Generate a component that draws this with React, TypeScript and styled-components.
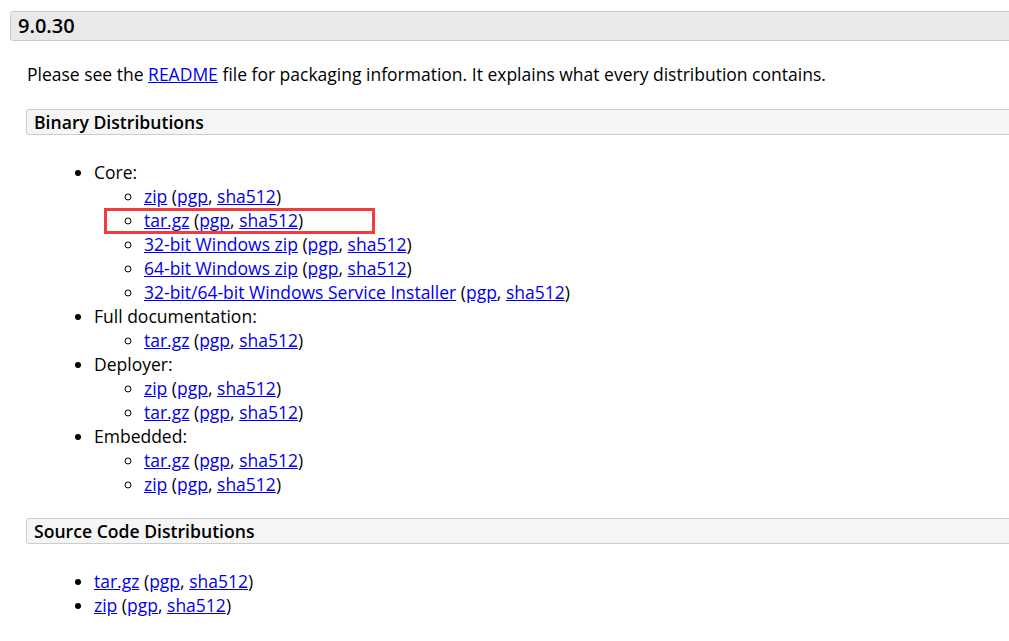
import React from 'react';
import styled, { createGlobalStyle } from 'styled-components';

const GlobalStyle = createGlobalStyle`
	html, body {
		margin: 0;
		padding: 0;
		background: #fff;
		overflow: hidden;
	}
	body {
		font-family: 'Open Sans', 'Liberation Sans', sans-serif;
		font-size: 17.5px;
		color: #000;
	}
`;

type Link = { label: string; highlight?: boolean };

const binary: { title: string; items: Link[] }[] = [
	{
		title: 'Core:',
		items: [
			{ label: 'zip' },
			{ label: 'tar.gz', highlight: true },
			{ label: '32-bit Windows zip' },
			{ label: '64-bit Windows zip' },
			{ label: '32-bit/64-bit Windows Service Installer' },
		],
	},
	{ title: 'Full documentation:', items: [{ label: 'tar.gz' }] },
	{ title: 'Deployer:', items: [{ label: 'zip' }, { label: 'tar.gz' }] },
	{ title: 'Embedded:', items: [{ label: 'tar.gz' }, { label: 'zip' }] },
];

const source: Link[] = [{ label: 'tar.gz' }, { label: 'zip' }];

const Download = ({ label }: { label: string }) => (
	<>
		<A href="#">{label}</A> (<A href="#">pgp</A>, <A href="#">sha512</A>)
	</>
);

export default function App() {
	return (
		<React.Fragment>
			<GlobalStyle />
			<Page>
				<VersionHeader>9.0.30</VersionHeader>
				<Section>
					<Intro>
						Please see the <A href="#">README</A> file for packaging information. It explains what every
						distribution contains.
					</Intro>
					<SubHeader>Binary Distributions</SubHeader>
					<List>
						{binary.map((group) => (
							<li key={group.title}>
								{group.title}
								<SubList>
									{group.items.map((item, i) => (
										<Item key={i}>
											{item.highlight && <Highlight />}
											<Download label={item.label} />
										</Item>
									))}
								</SubList>
							</li>
						))}
					</List>
					<SubHeader>Source Code Distributions</SubHeader>
					<List>
						{source.map((item, i) => (
							<li key={i}>
								<Download label={item.label} />
							</li>
						))}
					</List>
				</Section>
			</Page>
		</React.Fragment>
	);
}

const Page = styled.div`
	padding: 11px 0 0 10px;
`;

const VersionHeader = styled.h2`
	margin: 0 -20px 0 0;
	height: 30px;
	box-sizing: border-box;
	padding: 0 0 0 7px;
	line-height: 28px;
	font-size: 20px;
	font-weight: 600;
	background: #e9e9e9;
	border: 1px solid #ccc;
	border-radius: 3px;
`;

const Section = styled.div`
	padding-left: 16px;
`;

const Intro = styled.p`
	margin: 21px 0 23px 1px;
	line-height: 24px;
`;

const SubHeader = styled.h3`
	margin: 0 -20px 0 0;
	height: 26px;
	box-sizing: border-box;
	padding: 0 0 0 7px;
	line-height: 24px;
	font-size: 17.6px;
	font-weight: 600;
	background: #f5f5f5;
	border: 1px solid #ccc;
	border-radius: 3px;
`;

const List = styled.ul`
	margin: 25px 0 22px;
	padding-left: 68px;
	line-height: 24px;
	list-style: disc;
`;

const SubList = styled.ul`
	margin: 0;
	padding-left: 50px;
	list-style: circle;
`;

const Item = styled.li`
	position: relative;
`;

const Highlight = styled.span`
	position: absolute;
	left: -40px;
	top: 0;
	width: 271px;
	height: 26px;
	box-sizing: border-box;
	border: 3px solid #f03c3c;
	pointer-events: none;
`;

const A = styled.a`
	color: #0000ee;
	text-decoration: underline;
`;
